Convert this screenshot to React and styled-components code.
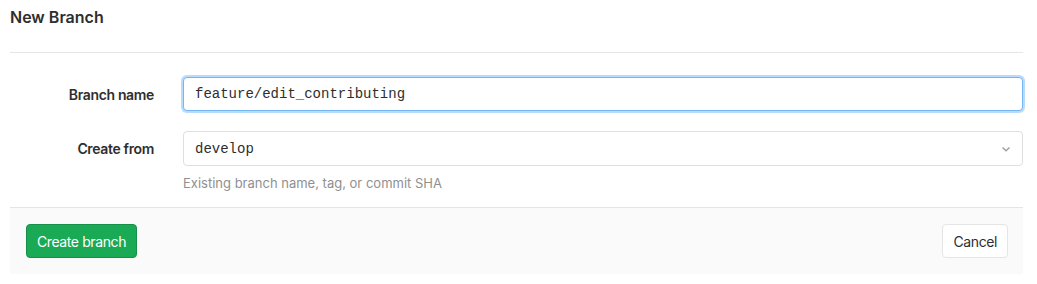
import styled, { createGlobalStyle } from 'styled-components';

const GlobalStyle = createGlobalStyle`
  body {
    margin: 0;
    background: #fff;
    font-family: Inter, "Liberation Sans", sans-serif;
    color: #2e2e2e;
  }
`;

const Page = styled.div`
  padding: 0 14px 0 10px;
`;

const Header = styled.div`
  padding: 7px 0 25px;
  border-bottom: 1px solid #e5e5e5;
  & h3 {
    margin: 0;
    font-size: 16px;
    line-height: 20px;
    font-weight: 600;
    color: #2e2e2e;
  }
`;

const Form = styled.form`
  padding-top: 24px;
`;

const FormGroup = styled.div`
  display: flex;
  align-items: flex-start;
  gap: 29px;
  margin-bottom: ${(props) => props.$mb ?? 20}px;
`;

const Label = styled.label`
  width: 144px;
  flex-shrink: 0;
  text-align: right;
  font-size: 14px;
  font-weight: 600;
  letter-spacing: -0.35px;
  line-height: 35px;
  height: 34px;
  color: #2e2e2e;
`;

const Field = styled.div`
  flex: 1;
  display: flex;
  flex-direction: column;
`;

const mono = `
  font-family: "Liberation Mono", "DejaVu Sans Mono", monospace;
  font-size: 14px;
  color: #2e2e2e;
`;

const Input = styled.input`
  ${mono}
  box-sizing: border-box;
  height: 34px;
  width: 100%;
  padding: 5px 11px;
  line-height: 22px;
  border: 1px solid ${(props) => (props.$focused ? '#73b5f5' : '#dfdfdf')};
  border-radius: 4px;
  outline: none;
  box-shadow: ${(props) =>
    props.$focused ? '0 0 0 2px rgba(128, 189, 255, 0.55)' : 'none'};
`;

const SelectBox = styled.div`
  ${mono}
  box-sizing: border-box;
  height: 35px;
  display: flex;
  align-items: center;
  justify-content: space-between;
  padding: 0 11px;
  border: 1px solid #dfdfdf;
  border-radius: 4px;
`;

const Help = styled.p`
  margin: 9px 0 0;
  font-size: 13px;
  line-height: 16px;
  color: #909090;
`;

const Footer = styled.div`
  display: flex;
  justify-content: space-between;
  align-items: center;
  margin-top: 16px;
  padding: 16px 15px 16px 16px;
  background: #fafafa;
  border-top: 1px solid #e5e5e5;
`;

const Button = styled.button`
  box-sizing: border-box;
  height: 34px;
  padding: 0 10px;
  font-family: Inter, "Liberation Sans", sans-serif;
  font-size: 14px;
  letter-spacing: -0.4px;
  border-radius: 4px;
  border: 1px solid ${(props) => (props.$primary ? '#168f48' : '#e5e5e5')};
  background: ${(props) => (props.$primary ? '#1aaa55' : '#fff')};
  color: ${(props) => (props.$primary ? '#fff' : '#2e2e2e')};
  cursor: pointer;
`;

function Chevron() {
  return (
    <svg width="10" height="10" viewBox="0 0 10 10" fill="none">
      <path d="M1.5 3.5 L5 6.8 L8.5 3.5" stroke="#a0a0a0" strokeWidth="1.5" />
    </svg>
  );
}

export default function App() {
  return (
    <>
      <GlobalStyle />
      <Page>
        <Header>
          <h3>New Branch</h3>
        </Header>
        <Form onSubmit={(e) => e.preventDefault()}>
          <FormGroup>
            <Label htmlFor="branch_name">Branch name</Label>
            <Field>
              <Input
                id="branch_name"
                $focused
                defaultValue="feature/edit_contributing"
              />
            </Field>
          </FormGroup>
          <FormGroup $mb={0}>
            <Label>Create from</Label>
            <Field>
              <SelectBox>
                <span>develop</span>
                <Chevron />
              </SelectBox>
              <Help>Existing branch name, tag, or commit SHA</Help>
            </Field>
          </FormGroup>
          <Footer>
            <Button $primary>Create branch</Button>
            <Button type="button">Cancel</Button>
          </Footer>
        </Form>
      </Page>
    </>
  );
}
